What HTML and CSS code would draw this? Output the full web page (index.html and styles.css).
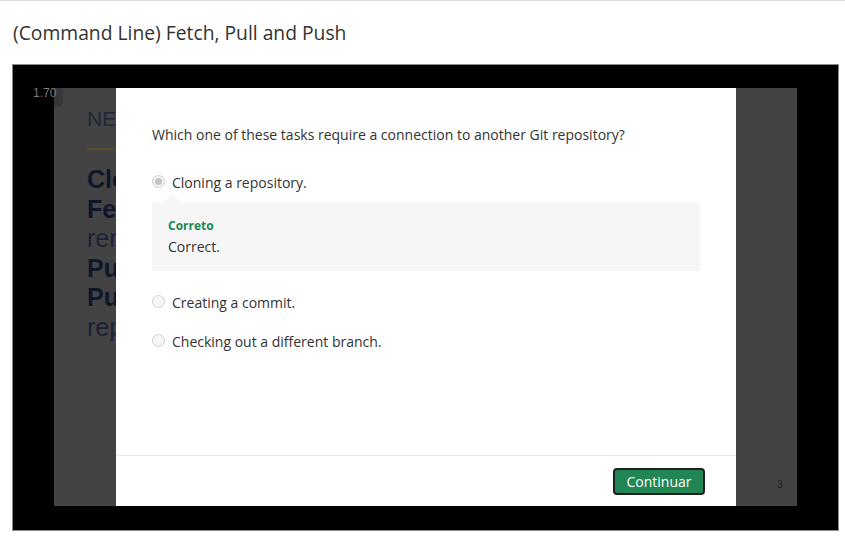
FILE: index.html
```html
<!DOCTYPE html>
<html>
<head>
<meta charset="utf-8">
<link rel="stylesheet" href="styles.css">
</head>
<body>
<h1 class="title">(Command Line) Fetch, Pull and Push</h1>
<div class="frame">
  <div class="slide">
    <div class="speed">1.70</div>
    <div class="slide-content">
      <div class="slide-head">NETS</div>
      <div class="slide-rule"></div>
      <div class="slide-lines">
        <div class="b">Clone</div>
        <div class="b">Fetch</div>
        <div>remote</div>
        <div class="b">Pull</div>
        <div class="b">Push</div>
        <div>repo</div>
      </div>
    </div>
    <div class="page-num">3</div>
    <div class="modal">
      <div class="modal-body">
        <p class="question">Which one of these tasks require a connection to another Git repository?</p>
        <div class="option selected">
          <span class="radio checked"></span>
          <span class="label">Cloning a repository.</span>
        </div>
        <div class="feedback">
          <div class="fb-title">Correto</div>
          <div class="fb-text">Correct.</div>
        </div>
        <div class="option">
          <span class="radio"></span>
          <span class="label">Creating a commit.</span>
        </div>
        <div class="option">
          <span class="radio"></span>
          <span class="label">Checking out a different branch.</span>
        </div>
      </div>
      <div class="modal-footer">
        <button class="btn">Continuar</button>
      </div>
    </div>
  </div>
</div>
</body>
</html>
```

FILE: styles.css
```css
html, body {
  margin: 0;
  padding: 0;
  background: #fff;
}
body {
  border-top: 1px solid #dcdcdc;
  font-family: "Open Sans", "Liberation Sans", sans-serif;
  color: #333;
}
.title {
  margin: 0;
  padding: 18px 13px 0;
  font-size: 19.3px;
  line-height: 27px;
  font-weight: 400;
  color: #333;
}
.frame {
  margin: 18px 0 0 12px;
  border: 1px solid #8a8a8a;
  background: #000;
  padding: 23px 41px 24px;
  box-sizing: border-box;
  width: 827px;
  height: 467px;
}
.slide {
  position: relative;
  height: 418px;
  background: #434343;
}
.speed {
  position: absolute;
  left: -28px;
  top: -4px;
  width: 37px;
  height: 23px;
  box-sizing: border-box;
  padding: 2px 0 0 7px;
  background: rgba(0, 0, 0, 0.17);
  border-radius: 0 0 5px 0;
  font-family: "Liberation Sans", sans-serif;
  font-size: 12px;
  line-height: 14px;
  color: #7a7a7a;
}
.slide-content {
  margin-left: 33px;
  padding-top: 19px;
  width: 200px;
  white-space: nowrap;
  font-family: "Liberation Sans", sans-serif;
}
.slide-head {
  font-size: 21px;
  line-height: 24px;
  color: #20273a;
}
.slide-rule {
  margin-top: 17px;
  width: 120px;
  height: 2px;
  background: #5f4b22;
}
.slide-lines {
  margin-top: 15px;
  font-size: 25px;
  line-height: 29.5px;
  color: #1c2338;
}
.slide-lines .b {
  font-weight: 700;
  color: #10172b;
}
.page-num {
  position: absolute;
  left: 723px;
  top: 391px;
  font-family: "Liberation Sans", sans-serif;
  font-size: 10px;
  color: #1e1e1e;
}
.modal {
  position: absolute;
  left: 62px;
  top: 0;
  width: 620px;
  height: 418px;
  background: #fff;
  display: flex;
  flex-direction: column;
}
.modal-body {
  flex: 1;
  padding: 37px 36px 0;
}
.question {
  margin: 0 0 28px;
  font-size: 14px;
  line-height: 20px;
  color: #333;
}
.option {
  display: flex;
  align-items: center;
  gap: 7px;
  font-size: 14px;
  line-height: 20px;
  color: #333;
  margin-bottom: 19px;
}
.option.selected {
  margin-bottom: 10px;
}
.radio {
  width: 11px;
  height: 11px;
  border: 1px solid #d0d0d0;
  border-radius: 50%;
  background: #f6f6f6;
  position: relative;
  margin-top: -3px;
}
.radio.checked::after {
  content: "";
  position: absolute;
  left: 2px;
  top: 2px;
  width: 7px;
  height: 7px;
  border-radius: 50%;
  background: #c4c4c4;
}
.feedback {
  position: relative;
  background: #f6f6f6;
  padding: 14px 16px;
  margin-bottom: 22px;
}
.feedback::before {
  content: "";
  position: absolute;
  left: 11px;
  top: -9px;
  border-left: 9px solid transparent;
  border-right: 9px solid transparent;
  border-bottom: 9px solid #f6f6f6;
}
.fb-title {
  font-size: 12px;
  line-height: 17px;
  font-weight: 700;
  color: #1e8752;
  margin-bottom: 3px;
}
.fb-text {
  font-size: 14px;
  line-height: 20px;
  color: #333;
}
.modal-footer {
  border-top: 1px solid #e6e6e6;
  height: 51px;
  box-sizing: border-box;
  display: flex;
  justify-content: flex-end;
  align-items: center;
  padding-right: 31px;
}
.btn {
  width: 92px;
  height: 27px;
  background: #218654;
  border: 2px solid #1f1f1f;
  border-radius: 4px;
  color: #fff;
  font-family: "Open Sans", sans-serif;
  font-size: 14px;
  line-height: 20px;
  padding: 0;
  margin-top: 1px;
}
```
